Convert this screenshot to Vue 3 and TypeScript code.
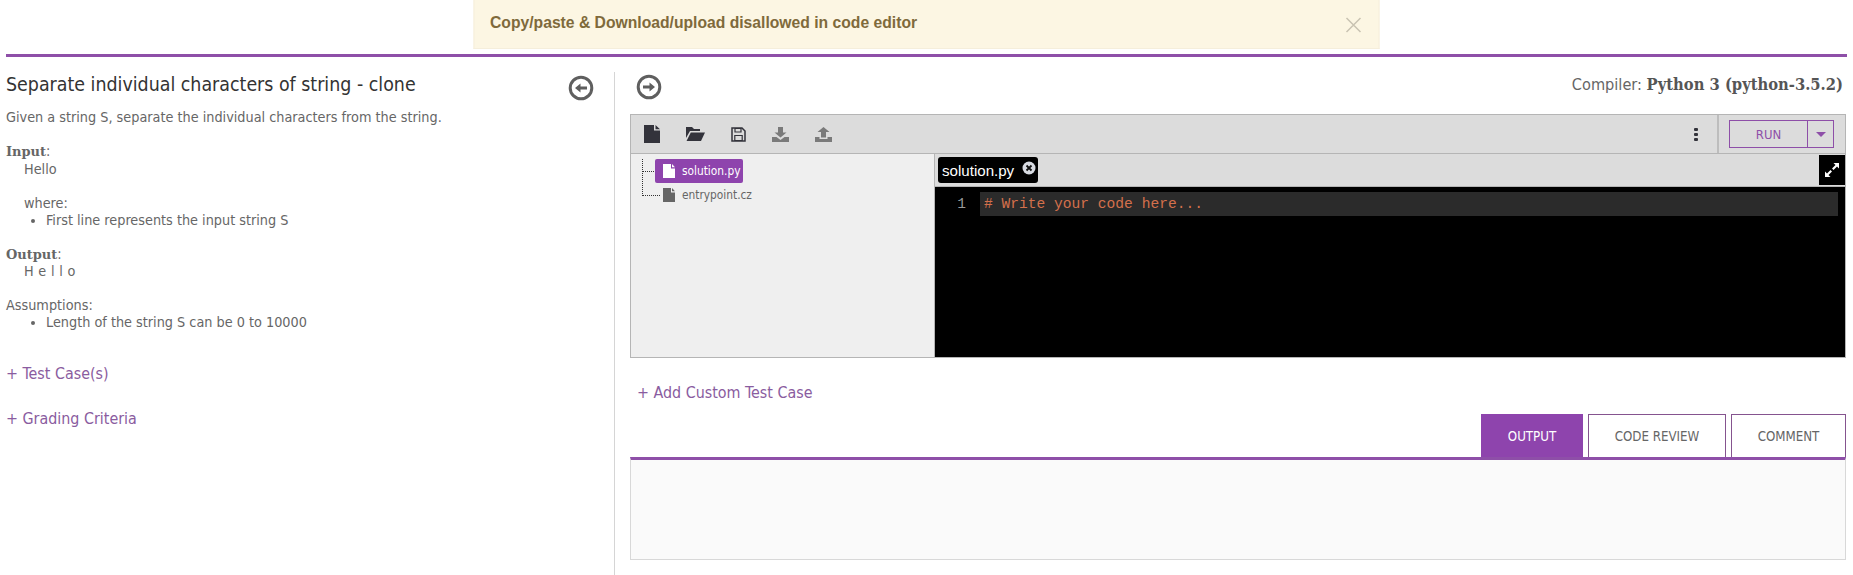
<template>
  <div class="page">
    <div class="alert">
      <span class="alert-text">Copy/paste &amp; Download/upload disallowed in code editor</span>
      <svg class="alert-close" width="16" height="16" viewBox="0 0 16 16"><path d="M1 1 15 15M15 1 1 15" stroke="#c9c3b2" stroke-width="1.5" fill="none" /></svg>
    </div>
    <div class="rule"></div>

    <div class="main">
      <section class="left">
        <div class="left-head">
          <h1>Separate individual characters of string - clone</h1>
          <svg class="circle-btn back" width="26" height="26" viewBox="0 0 26 26">
            <circle cx="13" cy="13" r="10.8" fill="none" stroke="#5f5f5f" stroke-width="3" />
            <path d="M7 13 12.500 8.500v3h6.500v3h-6.500v3z" fill="#5f5f5f" />
          </svg>
        </div>
        <p class="desc">Given a string S, separate the individual characters from the string.</p>
        <div class="block">
          <div class="label"><b>Input</b>:</div>
          <div class="ind">Hello</div>
          <div class="ind gap">where:</div>
          <ul><li>First line represents the input string S</li></ul>
        </div>
        <div class="block">
          <div><b>Output</b>:</div>
          <div class="ind spaced">H e l l o</div>
        </div>
        <div class="block">
          <div>Assumptions:</div>
          <ul><li>Length of the string S can be 0 to 10000</li></ul>
        </div>
        <a class="link first">+ Test Case(s)</a>
        <a class="link second">+ Grading Criteria</a>
      </section>

      <section class="right">
        <div class="right-head">
          <svg class="circle-btn forward" width="26" height="26" viewBox="0 0 26 26">
            <circle cx="13" cy="13" r="10.8" fill="none" stroke="#5f5f5f" stroke-width="3" />
            <path d="M19 13 13.500 8.500v3H7v3h6.500v3z" fill="#5f5f5f" />
          </svg>
          <div class="compiler">Compiler: <b>Python 3 (python-3.5.2)</b></div>
        </div>

        <div class="ide">
          <div class="toolbar">
            <div class="tools">
              <svg width="16" height="18" viewBox="0 0 16 18"><path d="M0 0h10v5.500h6V18H0zM11.500 0 16 4.200h-4.500z" fill="#33333b" /></svg>
              <svg width="19" height="14" viewBox="0 0 19 14"><path d="M0 0h6l2 2h6v2H4L0 11zM4.800 5.500H19L15 14H0.500z" fill="#33333b" /></svg>
              <svg width="15" height="15" viewBox="0 0 15 15"><path d="M1 1h10l3 3v10H1z" fill="none" stroke="#33333b" stroke-width="1.500" /><path d="M4 1.500h6v3.500H4zM3.800 8.500h7.400v5H3.800z" fill="none" stroke="#33333b" stroke-width="1.200" /></svg>
              <svg width="17" height="15" viewBox="0 0 17 15"><path d="M6 0h5v5.500h3.500l-6 5-6-5H6zM0 10h4.500l4 3 4-3H17v5H0z" fill="#7a7a7a" /></svg>
              <svg width="17" height="15" viewBox="0 0 17 15"><path d="M8.500 0l6 5H11v5.500H6V5H2.500zM0 10h4.500v2h8v-2H17v5H0z" fill="#7a7a7a" /></svg>
            </div>
            <div class="more"><i></i><i></i><i></i></div>
            <div class="run-wrap">
              <div class="run">
                <span class="run-label">RUN</span>
                <span class="run-caret"><i></i></span>
              </div>
            </div>
          </div>

          <div class="ide-body">
            <div class="tree">
              <div class="tree-lines"></div>
              <div class="node active">
                <svg width="12" height="14" viewBox="0 0 12 14"><path d="M0 0h8v4.500h4V14H0zM9 0l3 3.300H9z" fill="#fff" /></svg>
                solution.py
              </div>
              <div class="node">
                <svg width="12" height="14" viewBox="0 0 12 14"><path d="M0 0h8v4.500h4V14H0zM9 0l3 3.300H9z" fill="#666" /></svg>
                entrypoint.cz
              </div>
            </div>
            <div class="editor">
              <div class="tabbar">
                <div class="tab">
                  solution.py
                  <svg width="14" height="14" viewBox="0 0 14 14"><circle cx="7" cy="7" r="6.500" fill="#d8dbe2" /><path d="M4.500 4.500l5 5M9.500 4.500l-5 5" stroke="#111" stroke-width="1.800" /></svg>
                </div>
                <div class="expand">
                  <svg width="16" height="16" viewBox="0 0 16 16"><path d="M9.500 1H15v5.500L13 4.500 9.500 8 8 6.500 11.500 3zM6.500 15H1V9.500L3 11.500 6.500 8 8 9.500 4.500 13z" fill="#fff" /></svg>
                </div>
              </div>
              <div class="code">
                <span class="gutter">1</span>
                <div class="line"># Write your code here...</div>
              </div>
            </div>
          </div>
        </div>

        <a class="link custom">+ Add Custom Test Case</a>

        <div class="tabs">
          <div class="out-tab on">OUTPUT</div>
          <div class="out-tab">CODE REVIEW</div>
          <div class="out-tab">COMMENT</div>
        </div>
        <div class="output"></div>
      </section>
    </div>
  </div>
</template>

<script setup lang="ts">
</script>

<style>
body {
  margin: 0;
  background: #fff;
}
</style>

<style scoped>
.page {
  height: 575px;
  overflow: hidden;
  font-family: "DejaVu Sans", sans-serif;
  font-stretch: condensed;
  font-size: 14.3px;
  color: #666;
}

.alert {
  box-sizing: border-box;
  width: 906px;
  height: 49px;
  margin: 0 auto;
  padding: 14px 16px 0;
  background: #fcf6e3;
  border: 1px solid #f5eedb;
  border-top: 0;
  display: flex;
  justify-content: space-between;
  transform: translateX(-.5px);
}

.alert-text {
  font-family: "Liberation Sans", sans-serif;
  font-stretch: normal;
  font-size: 15.7px;
  font-weight: 700;
  color: #7f6a3b;
}

.alert-close {
  margin: 3px 1px 0 0;
}

.rule {
  height: 3px;
  margin: 5px 6px 0;
  background: #8e4fa8;
}

.main {
  display: flex;
  height: 518px;
}

.left {
  box-sizing: border-box;
  width: 615px;
  margin-top: 15px;
  padding: 0 0 0 6px;
  border-right: 1px solid #d5d5d5;
}

.left-head {
  display: flex;
  justify-content: space-between;
  padding-right: 20px;
}

.back {
  margin-top: 3px;
}

h1 {
  margin: 1px 0 0;
  font-size: 19.4px;
  font-weight: 400;
  line-height: 24px;
  color: #333;
}

.desc {
  margin: 8px 0 17px;
  line-height: 17px;
}

.block {
  line-height: 17px;
  margin-bottom: 17px;
}

.block b {
  font-family: "DejaVu Serif", serif;
  font-stretch: normal;
  font-size: 13px;
}

.label {
  margin-bottom: 1px;
}

.ind {
  padding-left: 18px;
}

.gap {
  margin-top: 17px;
}

.spaced {
  letter-spacing: .3px;
}

ul {
  margin: 0;
  padding-left: 40px;
}

.link {
  display: block;
  font-size: 15.9px;
  color: #8a5ca0;
}

.first {
  margin-top: 33px;
}

.second {
  margin-top: 26px;
}

.right {
  box-sizing: border-box;
  width: 1232px;
  padding: 0 0 0 15px;
}

.right-head {
  box-sizing: content-box;
  height: 42px;
  padding-top: 15px;
  padding-left: 6px;
  display: flex;
  justify-content: space-between;
}

.forward {
  margin-top: 2px;
}

.compiler {
  font-size: 16.2px;
  padding: 3px 4px 0 0;
}

.compiler b {
  font-family: "DejaVu Serif", serif;
  font-size: 16.4px;
  color: #555;
}

.ide {
  border: 1px solid #b5b5b5;
  width: 1216px;
  box-sizing: border-box;
}

.toolbar {
  display: flex;
  align-items: center;
  height: 38px;
  background: #dcdcdc;
  border-bottom: 1px solid #b5b5b5;
}

.tools {
  flex: 1;
  display: flex;
  align-items: center;
  gap: 26px;
  padding-left: 13px;
}

.more {
  display: flex;
  flex-direction: column;
  gap: 2px;
  margin-right: 19px;
}

.more i {
  width: 4px;
  height: 3px;
  background: #33333b;
  border-radius: 1px;
}

.run-wrap {
  height: 38px;
  border-left: 2px solid #bdbdbd;
  display: flex;
  align-items: center;
  padding: 0 11px 0 10px;
}

.run {
  display: flex;
  width: 105px;
  height: 28px;
  border: 1px solid #8e4fa8;
  box-sizing: border-box;
  color: #8e4fa8;
  font-size: 13px;
}

.run-label {
  flex: 1;
  display: flex;
  align-items: center;
  justify-content: center;
}

.run-caret {
  width: 25px;
  border-left: 1px solid #8e4fa8;
  display: flex;
  align-items: center;
  justify-content: center;
}

.run-caret i {
  border: 5px solid transparent;
  border-top: 5px solid #8e4fa8;
  border-bottom: 0;
}

.ide-body {
  display: flex;
  height: 203px;
}

.tree {
  position: relative;
  width: 303px;
  background: #efefef;
  padding: 5px 0 0 24px;
  box-sizing: border-box;
  font-size: 11.8px;
}

.tree-lines {
  position: absolute;
  left: 11px;
  top: 5px;
  width: 17px;
  height: 36px;
  border-left: 1px dotted #333;
  border-bottom: 1px dotted #333;
}

.tree-lines::before {
  content: "";
  position: absolute;
  left: 0;
  top: 12px;
  width: 13px;
  border-top: 1px dotted #333;
}

.node {
  position: relative;
  display: flex;
  align-items: center;
  gap: 7px;
  height: 24px;
  padding: 0 3px 0 8px;
  width: max-content;
}

.active {
  background: #8e44ad;
  color: #fff;
  border-radius: 2px;
}

.editor {
  flex: 1;
  display: flex;
  flex-direction: column;
  background: #000;
  border-left: 1px solid #b5b5b5;
}

.tabbar {
  height: 32px;
  background: #dcdcdc;
  display: flex;
  justify-content: space-between;
  padding-left: 3px;
  border-bottom: 1px solid #b5b5b5;
}

.tab {
  margin-top: 3px;
  height: 26px;
  background: #000;
  color: #fff;
  font-family: "Liberation Sans", sans-serif;
  font-stretch: normal;
  font-size: 15.1px;
  border-radius: 3px;
  display: flex;
  align-items: center;
  gap: 8px;
  padding: 0 2px 0 4px;
  box-sizing: border-box;
}

.tab svg {
  margin-top: -5px;
}

.expand {
  width: 26px;
  height: 30px;
  margin-top: 1px;
  background: #000;
  display: flex;
  align-items: center;
  justify-content: center;
}

.code {
  flex: 1;
  display: flex;
  padding: 5px 7px 0 0;
  font-family: "Liberation Mono", monospace;
  font-size: 14.6px;
}

.gutter {
  width: 31px;
  text-align: right;
  line-height: 24px;
  color: #999;
  margin-right: 14px;
}

.line {
  flex: 1;
  height: 24px;
  line-height: 24px;
  padding-left: 4px;
  background: #2b2b2b;
  color: #d4704c;
}

.custom {
  margin: 25px 0 0 7px;
}

.tabs {
  display: flex;
  justify-content: flex-end;
  gap: 5px;
  margin-top: 12px;
  width: 1216px;
}

.out-tab {
  box-sizing: border-box;
  height: 43px;
  width: 138px;
  border: 1px solid #85548f;
  border-bottom: 0;
  display: flex;
  align-items: center;
  justify-content: center;
  font-size: 13.2px;
}

.out-tab:last-child {
  width: 115px;
}

.on {
  width: 102px;
  background: #8e44ad;
  border-color: #8e44ad;
  color: #fff;
}

.output {
  box-sizing: border-box;
  width: 1216px;
  height: 103px;
  border: 1px solid #d8d8d8;
  border-top: 3px solid #8e4fa8;
  background: #fafafa;
}
</style>
